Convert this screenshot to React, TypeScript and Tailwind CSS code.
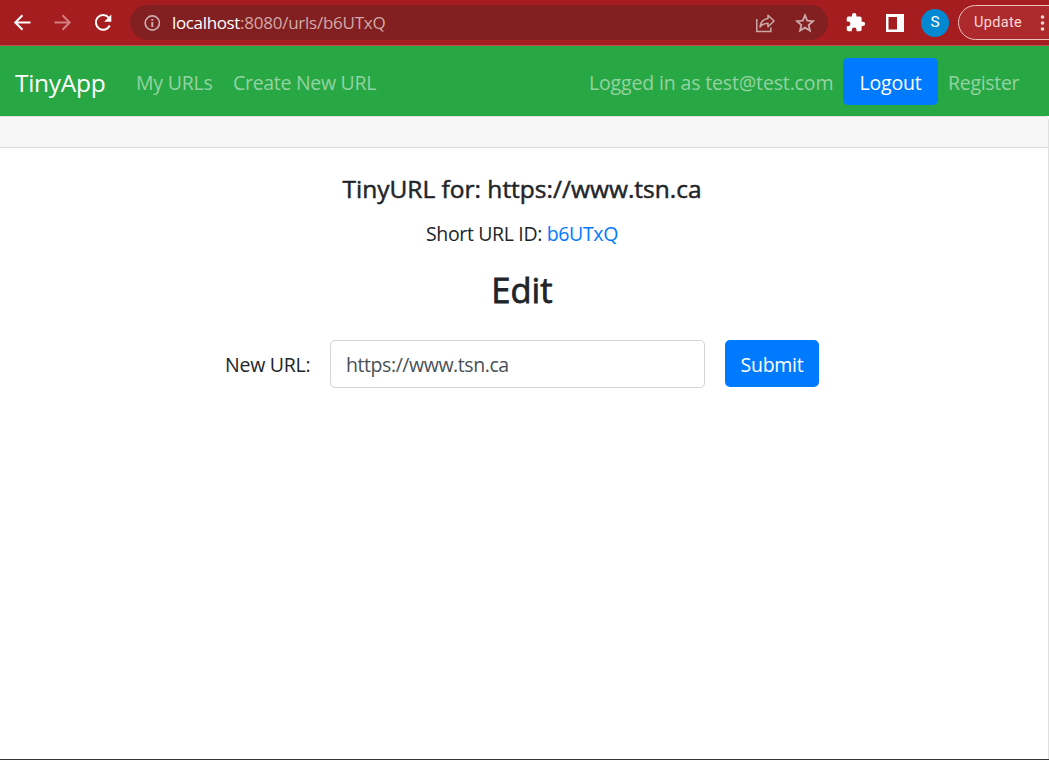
import React from "react";

function BrowserBar() {
  return (
    <header className="flex h-[46px] shrink-0 items-center overflow-hidden border-b border-[#b8534c] bg-[#a51d1f] text-white">
      <svg className="ml-[12px] h-5 w-5 shrink-0" viewBox="0 0 20 20" fill="none" stroke="white" strokeWidth="2">
        <path d="M18.5 9.500H3.5M10.5 2.300L3.3 9.500l7.2 7.200" />
      </svg>
      <svg className="ml-[21px] h-5 w-5 shrink-0" viewBox="0 0 20 20" fill="none" stroke="#d27f80" strokeWidth="2">
        <path d="M1.5 9.500h15M9.5 2.300l7.2 7.200-7.2 7.200" />
      </svg>
      <svg className="ml-[20px] h-5 w-5 shrink-0" viewBox="0 0 20 20" fill="none">
        <path d="M15.600 4.500A7.300 7.300 0 1 0 16.800 12.500" stroke="white" strokeWidth="2" />
        <path d="M18.300 1.600v7.100h-7.100z" fill="white" />
      </svg>
      <div className="ml-[17px] flex h-[35px] w-[698px] shrink-0 items-center rounded-full bg-[#821f20]">
        <svg className="ml-[14px] h-4 w-4 shrink-0" viewBox="0 0 16 16" fill="none" stroke="#c9abb0">
          <circle cx="8.300" cy="8" r="7.100" strokeWidth="1.700" />
          <path d="M8.300 7v5M8.300 4v1.800" strokeWidth="2" />
        </svg>
        <span className="ml-[12px] w-[580px] whitespace-nowrap pt-px text-[17px] leading-[24px] tracking-[-0.250px] text-[#d2a9a7]">
          <span className="tracking-[-0.350px] text-white">localhost</span>:8080/urls/b6UTxQ
        </span>
        <svg className="ml-[3px] h-5 w-5 shrink-0" viewBox="0 0 20 20" fill="none" stroke="#cba9a9" strokeWidth="1.5">
          <path d="M1.8 6v12.500h14v-4" />
          <path d="M13 2.200L19 8l-6 5.700v-3.500C9.500 10.200 7.200 11.200 5 14 5.500 9.500 8 6.200 13 5.600z" strokeLinejoin="round" />
        </svg>
        <svg className="ml-[20px] h-5 w-5 shrink-0" viewBox="0 0 20 20" fill="none" stroke="#cba9a9" strokeWidth="1.800">
          <path d="M10 2.400l2.250 5.300 5.750.5-4.360 3.780 1.310 5.620L10 14.620 5.050 17.600l1.310-5.620L2 8.200l5.750-.5z" />
        </svg>
      </div>
      <svg className="ml-[17px] h-[21px] w-[21px] shrink-0" viewBox="0 0 24 24" fill="white">
        <path d="M20.500 11H19V7a2 2 0 0 0-2-2h-4V3.500a2.500 2.500 0 0 0-5 0V5H4a2 2 0 0 0-2 2v3.800h1.500a2.700 2.700 0 0 1 0 5.400H2V20a2 2 0 0 0 2 2h3.800v-1.500a2.700 2.700 0 0 1 5.400 0V22H17a2 2 0 0 0 2-2v-4h1.500a2.500 2.500 0 0 0 0-5z" />
      </svg>
      <svg className="ml-[20px] h-[18px] w-[18px] shrink-0" viewBox="0 0 18 18">
        <path fill="white" fillRule="evenodd" d="M0 0h18v18H0zM2.500 3v12.500H11V3z" />
      </svg>
      <span className="ml-[17px] flex h-7 w-7 shrink-0 items-center justify-center rounded-full bg-[#0288d1] pt-px font-[Roboto] text-[15.500px] leading-none">
        S
      </span>
      <div className="ml-[9px] flex h-[35px] w-[110px] shrink-0 items-center rounded-full border border-[#edc1bf] bg-[#ad2a2c]">
        <span className="ml-[15px] w-[50px] whitespace-nowrap font-[Roboto] text-[14.500px] leading-[20px] tracking-[0.350px] text-[#ffd9d7]">Update</span>
        <svg className="ml-[16px] h-5 w-[5px] shrink-0" viewBox="0 0 5 20" fill="#f4d5d4">
          <circle cx="2.500" cy="4" r="1.800" />
          <circle cx="2.500" cy="10" r="1.800" />
          <circle cx="2.500" cy="16" r="1.800" />
        </svg>
      </div>
    </header>
  );
}

function NavBar() {
  return (
    <nav className="flex h-[70px] shrink-0 items-center bg-[#28a745] pt-[3px] text-[19.500px] leading-[30px] text-[#94d3a2]">
      <a className="ml-[15px] w-[121px] whitespace-nowrap text-[24.500px] tracking-[-0.300px] text-white">TinyApp</a>
      <a className="w-[97px] whitespace-nowrap tracking-[-0.200px]">My URLs</a>
      <a className="whitespace-nowrap tracking-[-0.300px]">Create New URL</a>
      <div className="ml-auto flex items-center">
        <span className="w-[254px] whitespace-nowrap tracking-[-0.150px]">Logged in as test@test.com</span>
        <button className="-mt-[2px] flex h-[47px] w-[95px] items-center justify-center rounded-[5px] bg-[#007bff] pt-[2px] tracking-[-0.150px] text-white">
          Logout
        </button>
        <a className="ml-[10px] w-[101px] whitespace-nowrap tracking-[-0.300px]">Register</a>
      </div>
    </nav>
  );
}

function EditPage() {
  return (
    <main className="flex min-h-0 flex-1 flex-col rounded-tr-[5px] border-r border-t border-[#dfdfdf] bg-white text-[#212529]">
      <div className="h-[31px] shrink-0 rounded-tr-[4px] border-b border-[#d9d9d9] bg-[#f7f7f7]" />
      <div className="flex flex-col items-center pr-[4px]">
        <h5 className="mt-[26px] whitespace-nowrap text-[24.500px] font-medium leading-[30px] [-webkit-text-stroke:0.500px_#212529]">
          TinyURL for: https://www.tsn.ca
        </h5>
        <p className="mt-[15px] whitespace-nowrap text-[19.500px] leading-[30px] tracking-[-0.350px]">
          Short URL ID: <a className="text-[#007bff]">b6UTxQ</a>
        </p>
        <h2 className="mt-[20px] text-[34.500px] font-medium leading-[42px] [-webkit-text-stroke:0.800px_#212529]">Edit</h2>
      </div>
      <form className="ml-[225px] mt-[29px] flex items-start text-[19.500px] tracking-[-0.250px]" onSubmit={(e) => e.preventDefault()}>
        <label htmlFor="url" className="mt-[10px] w-[105px] whitespace-nowrap leading-[30px]">New URL:</label>
        <input
          id="url"
          defaultValue="https://www.tsn.ca"
          className="h-[48px] w-[375px] rounded-[5px] border border-[#ced4da] bg-white px-[15px] pt-px tracking-[-0.430px] text-[#495057] outline-none"
        />
        <button className="ml-[20px] flex h-[47px] w-[94px] items-center justify-center rounded-[5px] bg-[#007bff] pt-[2px] text-white">
          Submit
        </button>
      </form>
    </main>
  );
}

export default function App() {
  return (
    <div className="flex h-[760px] w-[1049px] flex-col overflow-hidden border-b border-[#393639] bg-white font-['Open_Sans','Noto_Sans',sans-serif]">
      <BrowserBar />
      <NavBar />
      <EditPage />
    </div>
  );
}
